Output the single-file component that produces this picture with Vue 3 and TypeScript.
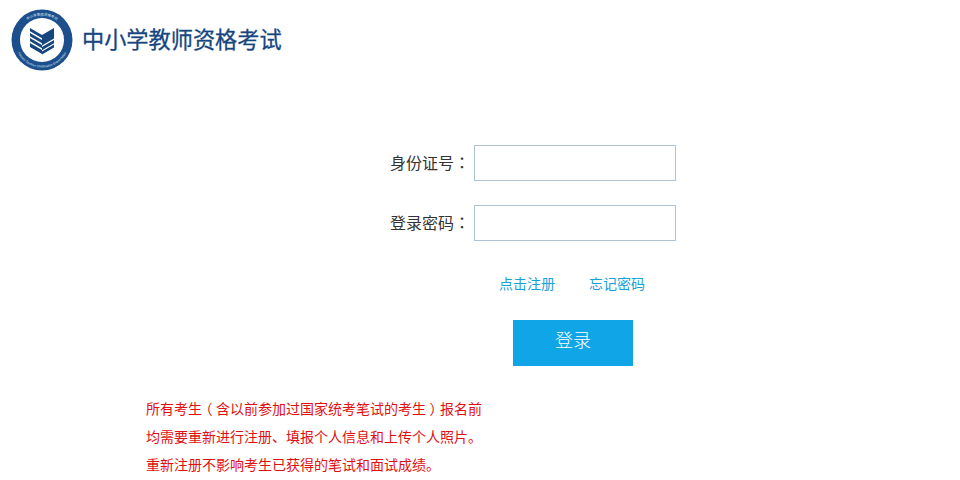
<template>
  <div class="page">
    <header class="header">
      <svg class="logo" viewBox="0 0 62 62" width="62" height="62" aria-label="logo">
        <defs>
          <path id="arc-top" d="M6.500 31a24.500 24.500 0 0 1 49 0" />
          <path id="arc-bottom" d="M3.500 31a27.500 27.500 0 0 0 55 0" />
        </defs>
        <circle cx="31" cy="31" r="30.500" fill="#1c4f8c" />
        <circle cx="31" cy="31" r="22" fill="#fff" />
        <text class="ring-cn">
          <textPath href="#arc-top" startOffset="50%" text-anchor="middle">中小学教师资格考试</textPath>
        </text>
        <text class="ring-en">
          <textPath href="#arc-bottom" startOffset="50%" text-anchor="middle">Primary Teacher Certification Examination</textPath>
        </text>
        <g fill="#17467e">
          <path d="M19 19 31 26V29.200L19 22.200Z" />
          <path d="M19 24 31 31V34.200L19 27.200Z" />
          <path d="M19 29 31 36V39.200L19 32.200Z" />
          <path d="M31 26 43 19V29.500L31 36.500Z" />
          <path d="M31 38 43 31V34.200L31 41.200Z" />
          <path d="M19 34 31 41 31 45 19 38ZM31 42.500 43 35.500V38.500L31 45.500Z" />
        </g>
      </svg>
      <h1 class="title">中小学教师资格考试</h1>
    </header>

    <main class="main">
      <form class="form" @submit.prevent>
        <div v-for="field in fields" :key="field.label" class="row">
          <label class="label">{{ field.label }}</label>
          <span class="colon">：</span>
          <input class="input" :type="field.type" />
        </div>
        <div class="links">
          <a class="link" href="#">点击注册</a>
          <a class="link" href="#">忘记密码</a>
        </div>
        <button class="submit" type="submit">登录</button>
      </form>

      <div class="notice">
        <p>所有考生<span class="paren">（</span>含以前参加过国家统考笔试的考生<span class="paren">）</span>报名前</p>
        <p>均需要重新进行注册、填报个人信息和上传个人照片。</p>
        <p>重新注册不影响考生已获得的笔试和面试成绩。</p>
      </div>
    </main>
  </div>
</template>

<script setup lang="ts">
interface Field {
  label: string
  type: string
}

const fields: Field[] = [
  { label: '身份证号', type: 'text' },
  { label: '登录密码', type: 'password' }
]
</script>

<style>
html,
body {
  margin: 0;
  background: #fff;
  overflow: hidden;
}
</style>

<style scoped>
.page {
  width: 960px;
  height: 480px;
  overflow: hidden;
  font-family: "Noto Sans CJK SC", "Liberation Sans", sans-serif;
}

.header {
  display: flex;
  align-items: center;
  gap: 9px;
  padding: 9px 0 0 11px;
}

.logo {
  flex: none;
}

.ring-cn {
  font-size: 3.500px;
  fill: #dfe9f4;
}

.ring-en {
  font-size: 3.200px;
  fill: #dfe9f4;
  font-family: "Liberation Sans", sans-serif;
}

.title {
  margin: 0 0 4px;
  font-size: 22.200px;
  line-height: 30px;
  font-weight: 400;
  color: #17467e;
  -webkit-text-stroke: 0.300px #17467e;
}

.main {
  padding-top: 74px;
}

.form {
  display: flex;
  flex-direction: column;
}

.row {
  display: flex;
  align-items: center;
  height: 36px;
  margin-bottom: 24px;
  padding-left: 390px;
}

.label {
  width: 64px;
  font-size: 16px;
  line-height: 34px;
  height: 36px;
  white-space: nowrap;
  color: #333;
}

.colon {
  width: 20px;
  font-family: "Noto Sans CJK TC", sans-serif;
  font-size: 16px;
  line-height: 34px;
  height: 36px;
  color: #333;
}

.input {
  box-sizing: border-box;
  width: 202px;
  height: 36px;
  border: 1px solid #aec2d6;
  padding: 0 8px;
  background: #fff;
  outline: none;
}

.links {
  display: flex;
  gap: 34px;
  padding: 6px 0 0 499px;
}

.link {
  font-size: 14px;
  line-height: 24px;
  color: #18a0d8;
  text-decoration: none;
}

.submit {
  width: 120px;
  height: 46px;
  margin: 25px 0 0 513px;
  border: 0;
  padding: 0 0 9px;
  background: #10a5e6;
  color: #fff;
  font-family: inherit;
  font-size: 18px;
  font-weight: 300;
}

.notice {
  padding: 28px 0 0 146px;
  font-size: 14px;
  line-height: 28px;
  color: #e01010;
}

.notice p {
  margin: 0;
  white-space: nowrap;
}

/* the reference font centres full-width brackets in their cell */
.paren {
  display: inline-block;
  width: 14px;
  text-align: center;
  font-feature-settings: "halt";
}
</style>
